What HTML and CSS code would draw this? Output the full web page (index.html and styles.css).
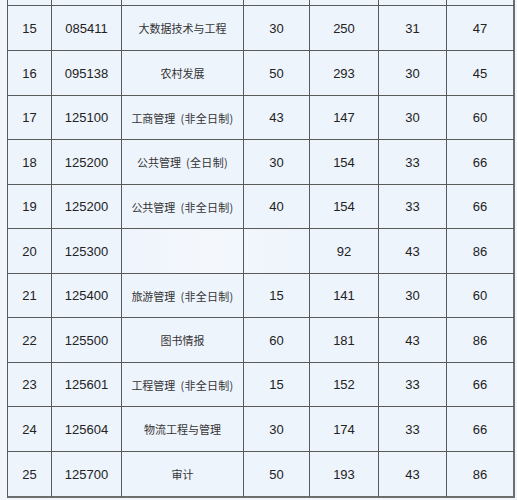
FILE: index.html
```html
<!DOCTYPE html>
<html lang="zh">
<head>
<meta charset="utf-8">
<title>招生计划</title>
<link rel="stylesheet" href="styles.css">
</head>
<body>
<div class="sheet">
  <div class="grid">
    <div class="c"></div><div class="c"></div><div class="c"></div><div class="c"></div><div class="c"></div><div class="c"></div><div class="c last"></div>

    <div class="c num">15</div><div class="c num">085411</div><div class="c zh">大数据技术与工程</div><div class="c num">30</div><div class="c num">250</div><div class="c num">31</div><div class="c num last">47</div>
    <div class="c num">16</div><div class="c num">095138</div><div class="c zh">农村发展</div><div class="c num">50</div><div class="c num">293</div><div class="c num">30</div><div class="c num last">45</div>
    <div class="c num">17</div><div class="c num">125100</div><div class="c zh">工商管理<span class="p">(非全日制)</span></div><div class="c num">43</div><div class="c num">147</div><div class="c num">30</div><div class="c num last">60</div>
    <div class="c num">18</div><div class="c num">125200</div><div class="c zh">公共管理<span class="p">(全日制)</span></div><div class="c num">30</div><div class="c num">154</div><div class="c num">33</div><div class="c num last">66</div>
    <div class="c num">19</div><div class="c num">125200</div><div class="c zh">公共管理<span class="p">(非全日制)</span></div><div class="c num">40</div><div class="c num">154</div><div class="c num">33</div><div class="c num last">66</div>
    <div class="c num">20</div><div class="c num">125300</div><div class="c zh smudge"></div><div class="c num smudge2"></div><div class="c num">92</div><div class="c num">43</div><div class="c num last">86</div>
    <div class="c num">21</div><div class="c num">125400</div><div class="c zh">旅游管理<span class="p">(非全日制)</span></div><div class="c num">15</div><div class="c num">141</div><div class="c num">30</div><div class="c num last">60</div>
    <div class="c num">22</div><div class="c num">125500</div><div class="c zh">图书情报</div><div class="c num">60</div><div class="c num">181</div><div class="c num">43</div><div class="c num last">86</div>
    <div class="c num">23</div><div class="c num">125601</div><div class="c zh">工程管理<span class="p">(非全日制)</span></div><div class="c num">15</div><div class="c num">152</div><div class="c num">33</div><div class="c num last">66</div>
    <div class="c num">24</div><div class="c num">125604</div><div class="c zh">物流工程与管理</div><div class="c num">30</div><div class="c num">174</div><div class="c num">33</div><div class="c num last">66</div>
    <div class="c num bot">25</div><div class="c num bot">125700</div><div class="c zh bot">审计</div><div class="c num bot">50</div><div class="c num bot">193</div><div class="c num bot">43</div><div class="c num bot last">86</div>
  </div>
</div>
</body>
</html>
```
FILE: styles.css
```css
html, body {
  margin: 0;
  padding: 0;
  background: #f2f5fa;
}
.sheet {
  padding-left: 7px;
  width: 517px;
  height: 500px;
  box-sizing: border-box;
  overflow: hidden;
}
.grid {
  display: grid;
  grid-template-columns: 45px 70px 122px 66px 69px 68px 68px;
  grid-template-rows: 6px 45px 45px 44px 45px 44px 45px 44px 45px 44px 45px 46px;
  width: max-content;
}
.c {
  box-sizing: border-box;
  background: #eef4fc;
  border-right: 1px solid #5a5a5a;
  border-bottom: 1px solid #5a5a5a;
  display: flex;
  align-items: center;
  justify-content: center;
  font-family: "Liberation Sans", Arial, sans-serif;
  color: #222;
  white-space: nowrap;
  overflow: hidden;
}
.grid > .c:nth-child(7n+1) {
  border-left: 1px solid #5a5a5a;
}
.c.last {
  border-right: 2px solid #6e6e6e;
}
.c.bot {
  border-bottom: 2px solid #6e6e6e;
}
.num {
  font-size: 13px;
}
.zh {
  font-family: "Noto Sans CJK SC", "Liberation Sans", sans-serif;
  font-size: 11px;
  color: #333;
}
.zh .p {
  margin-left: 5px;
  letter-spacing: 0.3px;
}
.smudge {
  background: linear-gradient(90deg, #eef4fc 0%, #f2f6fd 40%, #f4f8fd 70%, #f2f7fd 100%);
}
.smudge2 {
  background: linear-gradient(90deg, #f2f7fd 0%, #f0f5fc 60%, #eef4fc 100%);
}
```
